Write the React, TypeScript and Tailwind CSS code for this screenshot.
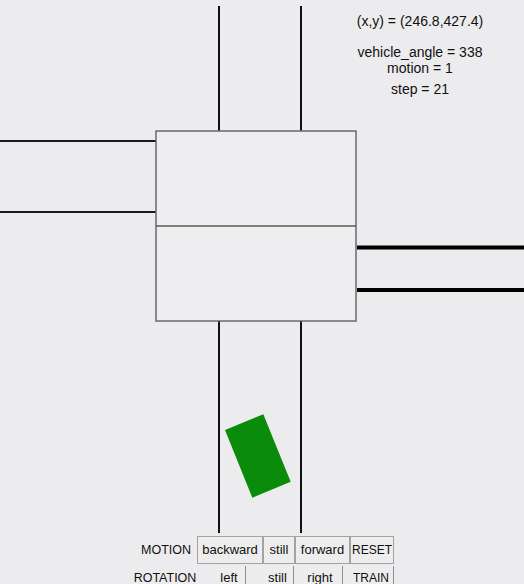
const font = { fontFamily: '"Liberation Sans", Arial, sans-serif' }

function Info() {
  return (
    <div
      className="absolute left-[340px] top-[13px] w-[160px] flex flex-col items-center text-[14px] leading-[16px] text-[#111]"
      style={font}
    >
      <div>(x,y) = (246.8,427.4)</div>
      <div className="mt-[15px]">vehicle_angle = 338</div>
      <div>motion = 1</div>
      <div className="mt-[5px]">step = 21</div>
    </div>
  )
}

function Road() {
  return (
    <svg width="524" height="535" viewBox="0 0 524 535" className="block">
      {/* vertical roads */}
      <line x1="219" y1="6" x2="219" y2="131" stroke="#111" strokeWidth="2" />
      <line x1="301" y1="6" x2="301" y2="131" stroke="#111" strokeWidth="2" />
      <line x1="219" y1="321" x2="219" y2="533" stroke="#111" strokeWidth="2" />
      <line x1="301" y1="321" x2="301" y2="533" stroke="#111" strokeWidth="2" />
      {/* left roads */}
      <line x1="0" y1="141" x2="156" y2="141" stroke="#1a1a1a" strokeWidth="2" />
      <line x1="0" y1="212" x2="156" y2="212" stroke="#1a1a1a" strokeWidth="2" />
      {/* right roads */}
      <line x1="357" y1="247.5" x2="524" y2="247.5" stroke="#000" strokeWidth="4" />
      <line x1="357" y1="290" x2="524" y2="290" stroke="#000" strokeWidth="4" />
      {/* junction box */}
      <rect x="156" y="131" width="200" height="190" fill="#eeedef" stroke="#6a6a6a" strokeWidth="1.5" />
      <line x1="156" y1="226" x2="356" y2="226" stroke="#5a5a5a" strokeWidth="1.5" />
      {/* vehicle */}
      <polygon points="225,430 263.3,414.3 290.7,481.7 252.3,497.7" fill="#0a8c0a" />
    </svg>
  )
}

function Btn({ label, className }: { label: string; className: string }) {
  return (
    <button className={`h-full flex items-center justify-center bg-[#ededed] text-[#111] ${className}`}>
      {label}
    </button>
  )
}

export default function App() {
  return (
    <div className="w-[524px] h-[584px] overflow-hidden bg-[#ecebed]" style={font}>
      <div className="relative h-[535px]">
        <Road />
        <Info />
      </div>
      <div className="flex items-center h-[29px] pt-[1px]">
        <span className="ml-[138px] w-[56px] text-center text-[12.5px] text-[#111]">MOTION</span>
        <div className="ml-[3px] flex h-[28px]">
          <Btn label="backward" className="w-[66px] text-[13px] border border-[#a3a3a3]" />
          <Btn label="still" className="w-[32px] text-[13px] border border-[#a3a3a3]" />
          <Btn label="forward" className="w-[55px] text-[13px] border border-[#a3a3a3]" />
          <Btn label="RESET" className="w-[44px] text-[12px] border border-[#a3a3a3]" />
        </div>
      </div>
      <div className="flex items-center h-[26px] pt-[2px]">
        <span className="ml-[133px] w-[64px] text-center text-[12.5px] text-[#111]">ROTATION</span>
        <div className="ml-[16px] flex h-[24px]">
          <Btn label="left" className="w-[33px] text-[13px] border-r border-[#8f8f8f]" />
          <Btn label="still" className="ml-[16px] w-[32px] text-[13px] border-r border-[#8f8f8f]" />
          <Btn label="right" className="ml-[4px] w-[45px] text-[13px] border-r border-[#8f8f8f]" />
          <Btn label="TRAIN" className="ml-[6px] w-[45px] text-[12px] border-r border-[#8f8f8f]" />
        </div>
      </div>
    </div>
  )
}
